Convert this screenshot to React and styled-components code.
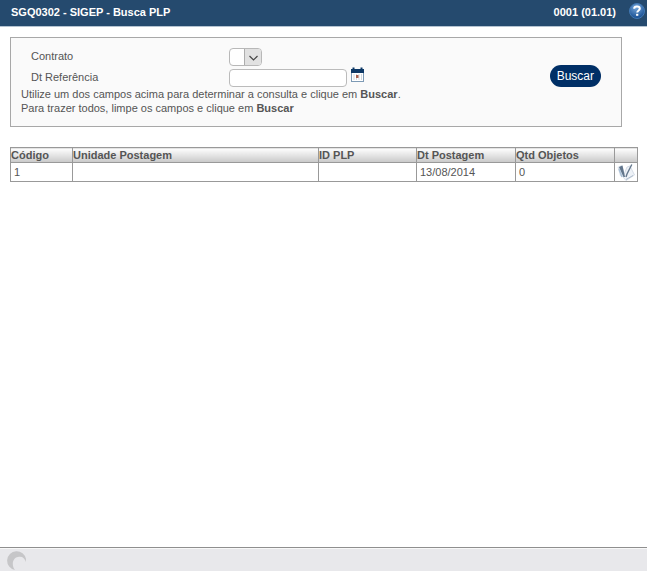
import { useState } from 'react';
import styled, { createGlobalStyle } from 'styled-components';

const GlobalStyle = createGlobalStyle`
  * { box-sizing: border-box; }
  body {
    margin: 0; background: #fff; color: #555;
    font-family: 'Liberation Sans', Arial, sans-serif;
    font-size: 11px; line-height: 14px;
  }
  input, select, button { font: inherit; color: inherit; }
`;

const Page = styled.div`display: flex; flex-direction: column; min-height: 100vh;`;

const Header = styled.header`
  display: flex; align-items: center; height: 27px; padding: 0 2px 2px 11px;
  background: #254a6e; border-bottom: 1px solid #b4c3d1; color: #fff;
`;

const Title = styled.h1`flex: 1; margin: 0; font-size: 11px; font-weight: bold;`;

const Version = styled.span`font-weight: bold; margin-right: 13px;`;

const IconButton = styled.button`
  display: flex; padding: 0; border: 0; background: none; cursor: pointer;
`;

const Content = styled.main`flex: 1; padding: 10px 9px 20px 10px;`;

const SearchPanel = styled.form`
  display: flex; align-items: center; justify-content: space-between;
  margin-right: 16px; padding: 9px 20px 11px 10px;
  background: #fafafa; border: 1px solid #a8a8a8;
`;

const Fields = styled.div`display: flex; flex-direction: column;`;

const FieldRow = styled.div`
  display: grid; grid-template-columns: 198px auto auto; justify-content: start;
  align-items: center; height: 20px; padding-left: 10px;
`;

const Label = styled.label`padding-bottom: 2px;`;

const SelectBox = styled.div`
  display: grid; width: 33px; height: 18px; overflow: hidden;
  border: 1px solid #b8b8b8; border-radius: 4px; background: #fff;
  > * { grid-area: 1 / 1; }
`;

const Select = styled.select`
  appearance: none; width: 100%; height: 16px; border: 0; padding: 0 18px 0 2px;
  background: transparent; outline: none;
`;

const SelectArrow = styled.span`
  display: flex; align-items: center; justify-content: center; justify-self: end;
  width: 17px; height: 16px; padding-top: 2px; pointer-events: none;
  background: #e1e1e1; border-left: 1px solid #adadad;
`;

const DateInput = styled.input`
  width: 118px; height: 18px; padding: 0 4px; margin-right: 4px;
  border: 1px solid #bbb; border-radius: 4px; background: #fff;
`;

const CalendarButton = styled(IconButton)`padding-bottom: 7px;`;

const Hint = styled.p`margin: 0;`;

const SearchButton = styled.button`
  height: 22px; padding: 0 7px; border: 0; border-radius: 11px; margin-top: -10px;
  background: #002f66; color: #fff; cursor: pointer;
  font-size: 12px;
`;

const ResultTable = styled.table`
  width: 100%; margin-top: 20px; border-collapse: collapse; table-layout: fixed;
`;

const Col = styled.col`width: ${({ $width }) => $width || 'auto'};`;

const HeadCell = styled.th`
  height: 15px; padding: 0; border: 1px solid #999; text-align: left; line-height: 14px;
  background: linear-gradient(#fff, #c8c8c8);
`;

const Cell = styled.td`
  height: 19px; padding: 0 3px; border: 1px solid #999; line-height: 14px;
`;

const ActionCell = styled(Cell)`padding: 0 2px;`;

const Footer = styled.footer`
  display: flex; align-items: flex-start; height: 24px; padding: 2px 7px 0; overflow: hidden;
  background: #e8e8eb; border-top: 1px solid #8f8f8f; box-shadow: inset 0 1px #f8f8f8;
`;

function HelpIcon() {
  return (
    <svg width="16" height="18" viewBox="0 0 16 18">
      <defs>
        <radialGradient id="help" cx="45%" cy="25%" r="75%">
          <stop offset="0" stopColor="#78a9dc" />
          <stop offset="1" stopColor="#144c91" />
        </radialGradient>
      </defs>
      <circle cx="8" cy="8" r="7.5" fill="url(#help)" stroke="#4279b4" />
      <path d="M5.2 5.8Q5.2 3.5 8 3.5Q10.8 3.5 10.8 5.8C10.8 7.5 8.2 7.5 8.2 9.6" fill="none" stroke="#fff" strokeWidth="2" />
      <rect x="7.1" y="10.8" width="2.2" height="2" fill="#fff" />
    </svg>
  );
}

function CalendarIcon() {
  return (
    <svg width="13" height="15" viewBox="0 0 13 15">
      <rect x="0.5" y="2.5" width="12" height="12" fill="#fff" stroke="#7d9ab5" />
      <rect y="2" width="13" height="4" fill="#0d3866" />
      <path d="M2.5 0.5v3M10.5 0.5v3" stroke="#0d3866" strokeWidth="2" />
      <path d="M3 7v6M5.5 7v6M8 7v6M10.5 7v6" stroke="#cfd8df" />
      <rect x="5" y="8" width="2.5" height="3" fill="#a8604f" />
    </svg>
  );
}

function EditIcon() {
  return (
    <svg width="18" height="18" viewBox="0 0 18 18">
      <path d="M0.5 4L5 2L9 15L3 13Z" fill="#dce4ed" />
      <path d="M6 14L10 4L13 3L17.5 12L9 17.5Z" fill="#eef2f7" stroke="#c5d0dd" strokeWidth="0.7" />
      <path d="M2 4L5.5 2.5L8 14L6.5 14Z" fill="#61758b" />
      <path d="M2 6L5 14" stroke="#a9bfd5" strokeWidth="1.4" />
      <path d="M14.8 1.5L10 11L9 14" fill="none" stroke="#65788d" strokeWidth="1.4" />
      <path d="M9 16.5L16 12.5" stroke="#aebccd" />
    </svg>
  );
}

function MoonLogo() {
  return (
    <svg width="20" height="22" viewBox="0 0 20 22">
      <path d="M19 9A9.5 9.5 0 1 0 8 20C4.5 16 5 8 11 7C15 6 18 8 18.5 12Z" fill="#c6c6c8" />
    </svg>
  );
}

const columns = [
  { label: 'Código', width: '62px' },
  { label: 'Unidade Postagem' },
  { label: 'ID PLP', width: '98px' },
  { label: 'Dt Postagem', width: '99px' },
  { label: 'Qtd Objetos', width: '99px' },
  { label: '', width: '23px' },
];

const rows = [
  { codigo: '1', unidade: '', plp: '', data: '13/08/2014', objetos: '0' },
];

export default function App() {
  const [date, setDate] = useState('');

  return (
    <Page>
      <GlobalStyle />
      <Header>
        <Title>SGQ0302 - SIGEP - Busca PLP</Title>
        <Version>0001 (01.01)</Version>
        <IconButton type="button" aria-label="Ajuda"><HelpIcon /></IconButton>
      </Header>

      <Content>
        <SearchPanel onSubmit={e => e.preventDefault()}>
          <Fields>
            <FieldRow>
              <Label htmlFor="contrato">Contrato</Label>
              <SelectBox>
                <Select id="contrato"><option value="" /></Select>
                <SelectArrow>
                  <svg width="9" height="6" viewBox="0 0 9 6">
                    <path d="M0.5 1L4.5 5L8.5 1" fill="none" stroke="#444" strokeWidth="1.2" />
                  </svg>
                </SelectArrow>
              </SelectBox>
            </FieldRow>
            <FieldRow>
              <Label htmlFor="referencia">Dt Referência</Label>
              <DateInput id="referencia" type="text" value={date} onChange={e => setDate(e.target.value)} />
              <CalendarButton type="button" aria-label="Abrir calendário"><CalendarIcon /></CalendarButton>
            </FieldRow>
            <Hint>Utilize um dos campos acima para determinar a consulta e clique em <b>Buscar</b>.</Hint>
            <Hint>Para trazer todos, limpe os campos e clique em <b>Buscar</b></Hint>
          </Fields>
          <SearchButton type="submit">Buscar</SearchButton>
        </SearchPanel>

        <ResultTable>
          <colgroup>
            {columns.map((col, i) => <Col key={i} $width={col.width} />)}
          </colgroup>
          <thead>
            <tr>
              {columns.map((col, i) => <HeadCell key={i} scope="col">{col.label}</HeadCell>)}
            </tr>
          </thead>
          <tbody>
            {rows.map(row => (
              <tr key={row.codigo}>
                <Cell>{row.codigo}</Cell>
                <Cell>{row.unidade}</Cell>
                <Cell>{row.plp}</Cell>
                <Cell>{row.data}</Cell>
                <Cell>{row.objetos}</Cell>
                <ActionCell>
                  <IconButton type="button" aria-label="Selecionar PLP"><EditIcon /></IconButton>
                </ActionCell>
              </tr>
            ))}
          </tbody>
        </ResultTable>
      </Content>

      <Footer><MoonLogo /></Footer>
    </Page>
  );
}
